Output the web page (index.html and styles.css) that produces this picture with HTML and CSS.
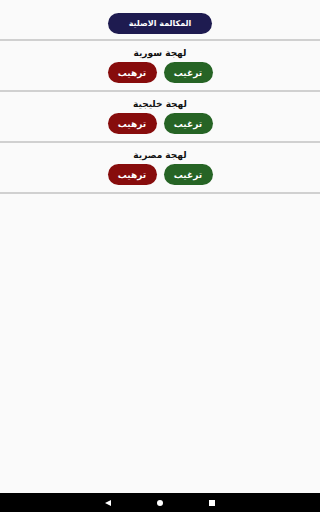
FILE: index.html
```html
<!DOCTYPE html>
<html lang="ar">
<head>
<meta charset="utf-8">
<link rel="stylesheet" href="styles.css">
</head>
<body>
<div class="screen">
  <main class="content">
    <header class="top">
      <div class="btn btn-navy">المكالمة الاصلية</div>
    </header>
    <section class="item">
      <div class="title">لهجة سورية</div>
      <div class="row" dir="rtl">
        <div class="btn btn-small btn-green">ترغيب</div>
        <div class="btn btn-small btn-red">ترهيب</div>
      </div>
    </section>
    <section class="item">
      <div class="title">لهجة خليجية</div>
      <div class="row" dir="rtl">
        <div class="btn btn-small btn-green">ترغيب</div>
        <div class="btn btn-small btn-red">ترهيب</div>
      </div>
    </section>
    <section class="item">
      <div class="title">لهجة مصرية</div>
      <div class="row" dir="rtl">
        <div class="btn btn-small btn-green">ترغيب</div>
        <div class="btn btn-small btn-red">ترهيب</div>
      </div>
    </section>
  </main>
  <nav class="navbar">
    <svg class="nav-icon" width="6" height="6" viewBox="0 0 6 6"><polygon points="6,0 6,6 0,3" fill="#fff"/></svg>
    <svg class="nav-icon" width="6" height="6" viewBox="0 0 6 6"><circle cx="3" cy="3" r="3" fill="#fff"/></svg>
    <svg class="nav-icon" width="6" height="6" viewBox="0 0 6 6"><rect x="0" y="0" width="6" height="6" fill="#fff"/></svg>
  </nav>
</div>
</body>
</html>
```
FILE: styles.css
```css
html, body {
  margin: 0;
  padding: 0;
}
body {
  background: #fafafa;
  font-family: "DejaVu Sans", "Noto Sans", sans-serif;
}
.screen {
  width: 320px;
  height: 512px;
  display: flex;
  flex-direction: column;
}
.content {
  flex: 1;
  display: flex;
  flex-direction: column;
}
.top {
  display: flex;
  justify-content: center;
  padding-top: 13px;
  padding-bottom: 5px;
  border-bottom: 2px solid #d0d0d0;
}
.btn {
  display: flex;
  align-items: center;
  justify-content: center;
  color: #fff;
  font-weight: bold;
  font-size: 8px;
  height: 21px;
  border-radius: 11px;
  box-sizing: border-box;
}
.btn-navy {
  width: 104px;
  background: #1e1b50;
}
.btn-small {
  width: 49px;
  font-size: 9px;
}
.btn-green {
  background: #266425;
}
.btn-red {
  background: #870c0c;
}
.item {
  display: flex;
  flex-direction: column;
  align-items: center;
  padding-top: 5px;
  padding-bottom: 7px;
  border-bottom: 2px solid #d0d0d0;
}
.title {
  font-size: 9px;
  font-weight: bold;
  color: #111;
  height: 14px;
  line-height: 14px;
  margin-bottom: 2px;
}
.row {
  display: flex;
  gap: 7px;
}
.navbar {
  height: 19px;
  background: #000;
  display: flex;
  align-items: center;
  justify-content: center;
  gap: 46px;
}
.nav-icon {
  display: block;
}
```
